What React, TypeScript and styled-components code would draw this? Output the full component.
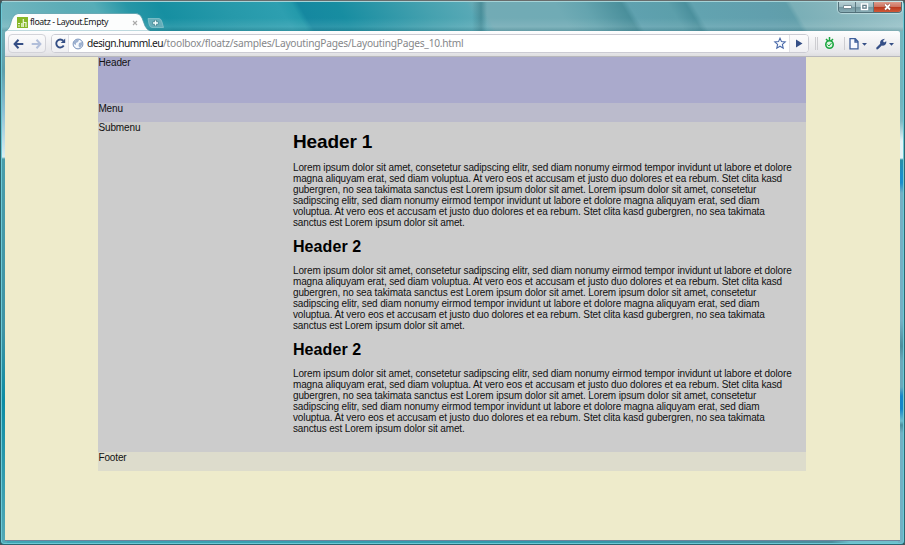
import React from "react";
import styled, { createGlobalStyle } from "styled-components";

const GlobalStyle = createGlobalStyle`
  * { box-sizing: border-box; }
  body { margin: 0; overflow: hidden; background: #4c5557; font-family: "Liberation Sans", Arial, sans-serif; }
`;

const Window = styled.div`
  width: 905px;
  height: 545px;
  padding: 0 5px 3px;
  display: flex;
  flex-direction: column;
  border: 1px solid #2b6570;
  border-top-color: #686c6c;
  border-radius: 5px 5px 4px 4px;
  box-shadow: inset 0 0 0 1px #6cc9d6;
  background:
    linear-gradient(180deg, #78b6bd 0, #5d9fab 70px, #8cc0d4 110px, #d8edf2 156px, #4a9daa 158px, #3f93a4 330px, #0c8ca4 400px, #54a9b6 100%) left / 6px 100% no-repeat,
    linear-gradient(180deg, #78b6bd 0, #71b4be 100px, #7fb9c4 120px, #e4f3f6 140px, #e4f3f6 157px, #288fa6 159px, #1b8ecb 175px, #1b8ecb 182px, #74b0c4 192px, #74b0c4 320px, #4c8e9c 345px, #6ba9bb 360px, #6ba9bb 386px, #1686c8 395px, #1686c8 408px, #6fbecd 420px, #4a8f9e 424px, #72b1c4 432px, #72b1c4 100%) right / 6px 100% no-repeat,
    linear-gradient(90deg, #40a5b5, #2f9aac 60%, #4c8d9c 92%, #6fbfcb 94%) bottom / 100% 6px no-repeat,
    #3f98a8;
`;

const TitleBar = styled.div`
  height: 30px;
  margin: 0 -4px;
  padding: 0 1px 0 4px;
  display: flex;
  flex: none;
  align-items: flex-end;
  border-top: 1px solid #a5d3d7;
  background:
    linear-gradient(180deg, transparent 55%, rgba(255, 255, 255, 0.1) 85%, rgba(60, 110, 120, 0.25) 100%),
    linear-gradient(90deg, transparent 470px, rgba(62, 133, 145, 0.75) 479px, rgba(62, 133, 145, 0.5) 481px, transparent 485px),
    linear-gradient(59deg, #76b7c0 0, #5bacb6 68px, #56adb7 92px, #2796a6 120px, #168fa1 148px, #2699aa 205px, #2d9fb0 250px, #249aab 262px, #1588a0 268px, #178da1 300px, #45a1af 375px, #58a9b6 412px, #72abb5 424px, #70abb5 488px, #64a4af 512px, #4a8f9b 545px, #5fa1af 551px, #5c9fab 585px, #4b909d 600px, #62a3b0 606px, #619fad 665px, #609eaa 686px, #7aafb7 691px, #84b4bb 720px, #9bc4ca 100%);
`;

const Tab = styled.div`
  position: relative;
  width: 140px;
  height: 17px;
  padding: 0 8px 0 11px;
  display: flex;
  align-items: center;
  font: 8.8px/17px "Noto Sans", sans-serif;
  letter-spacing: -0.42px;
  color: #17191b;
`;

const TabShape = styled.svg`
  position: absolute;
  left: 0;
  top: -1px;
`;

const TabText = styled.span`
  position: relative;
  flex: 1;
  margin-left: 2px;
  white-space: nowrap;
`;

const Glyph = styled.svg`
  position: relative;
  flex: none;
  display: block;
`;

const NewTab = styled(Glyph)`
  margin: 0 0 3px 1px;
`;

const WindowButtons = styled.div`
  align-self: flex-start;
  display: flex;
  margin-left: auto;
  height: 11px;
  border: 1px solid #52717a;
  border-top: 0;
  border-radius: 0 0 4px 4px;
  overflow: hidden;
  box-shadow: 0 0 1px 1px rgba(220, 243, 245, 0.6);
`;

const WindowButton = styled.div<{ $width: number; $close?: boolean }>`
  width: ${(p) => p.$width}px;
  display: flex;
  align-items: center;
  justify-content: center;
  border-left: ${(p) => (p.$width === 16 ? "0" : "1px solid #5d7a82")};
  background: ${(p) =>
    p.$close
      ? "linear-gradient(#dc9c8c 0, #cf7663 45%, #b9371c 50%, #cf5938 100%)"
      : "linear-gradient(#b5cdd2 0, #9fbdc4 45%, #72969f 50%, #89adb5 100%)"};
`;

const Toolbar = styled.div`
  height: 26px;
  margin: 0 -1px;
  padding: 3px 5px 0 3px;
  display: flex;
  flex: none;
  align-items: flex-start;
  border-bottom: 1px solid #b8b8bc;
  border-radius: 2px 2px 0 0;
  background: linear-gradient(#fdfdfe, #e7e7ea 85%, #dedee0);
`;

const NavGroup = styled.div`
  width: 38px;
  height: 19px;
  display: flex;
  align-items: center;
  justify-content: space-around;
  border: 1px solid #d3d3d9;
  border-radius: 4px;
  background: linear-gradient(#fbfbfc, #ededf0);
`;

const AddressBar = styled.div`
  flex: 1;
  height: 19px;
  margin: 0 6px 0 5px;
  display: flex;
  align-items: center;
  border: 1px solid #cbcbd3;
  border-radius: 4px;
  background: #fff;
`;

const EndButton = styled.div<{ $side: "left" | "right" }>`
  width: ${(p) => (p.$side === "left" ? 17 : 19)}px;
  height: 100%;
  display: flex;
  align-items: center;
  justify-content: center;
  border-${(p) => (p.$side === "left" ? "right" : "left")}: 1px solid #e0e0e6;
  border-radius: ${(p) => (p.$side === "left" ? "3px 0 0 3px" : "0 3px 3px 0")};
  background: linear-gradient(#fcfcfd, #f0f0f3);
`;

const Url = styled.span`
  flex: 1;
  margin-left: 3px;
  font: 10.2px/17px "Noto Sans", sans-serif;
  letter-spacing: -0.24px;
  white-space: nowrap;
  color: #85878a;
`;

const Domain = styled.span`
  letter-spacing: -0.52px;
  color: #17191b;
`;

const Tools = styled.div`
  display: flex;
  align-items: center;
  height: 19px;
`;

const Divider = styled.div<{ $before?: number; $gap: number }>`
  width: 1px;
  height: 13px;
  margin-left: ${(p) => p.$before ?? 0}px;
  margin-right: ${(p) => p.$gap}px;
  background: #cdcdd1;
`;

const Viewport = styled.div`
  flex: 1;
  margin: 0 -1px;
  padding-left: 93.4px;
  border-bottom: 1px solid #70829b;
  background: #eeebcb;
  font-size: 10px;
  letter-spacing: -0.12px;
  line-height: 11px;
  color: #111;
`;

const Page = styled.div`
  width: 708px;
`;

const Band = styled.div<{ $height: number; $color: string }>`
  height: ${(p) => p.$height}px;
  background: ${(p) => p.$color};
`;

const Columns = styled.div`
  display: flex;
  height: 330px;
  background: #ccc;
`;

const Submenu = styled.div`
  width: 194.6px;
`;

const Article = styled.div`
  padding-top: 8px;
  flex: 1;
`;

const Heading1 = styled.h1`
  margin: 0 0 9px;
  font-size: 19px;
  line-height: 23px;
  color: #000;
`;

const Heading2 = styled.h2`
  margin: 9px 0 8px;
  font-size: 16px;
  letter-spacing: 0.08px;
  line-height: 20px;
  color: #000;
`;

const Paragraph = styled.p`
  margin: 0;
  letter-spacing: -0.13px;
`;

const Line = styled.span`
  display: block;
  white-space: nowrap;
`;

const lorem = [
  "Lorem ipsum dolor sit amet, consetetur sadipscing elitr, sed diam nonumy eirmod tempor invidunt ut labore et dolore",
  "magna aliquyam erat, sed diam voluptua. At vero eos et accusam et justo duo dolores et ea rebum. Stet clita kasd",
  "gubergren, no sea takimata sanctus est Lorem ipsum dolor sit amet. Lorem ipsum dolor sit amet, consetetur",
  "sadipscing elitr, sed diam nonumy eirmod tempor invidunt ut labore et dolore magna aliquyam erat, sed diam",
  "voluptua. At vero eos et accusam et justo duo dolores et ea rebum. Stet clita kasd gubergren, no sea takimata",
  "sanctus est Lorem ipsum dolor sit amet.",
];

const Lorem = () => (
  <Paragraph>
    {lorem.map((line) => (
      <Line key={line}>{line}</Line>
    ))}
  </Paragraph>
);

const Arrow = ({ color, flip }: { color: string; flip?: boolean }) => (
  <Glyph width="11" height="10" viewBox="0 0 11 10">
    <path
      d="M10.3 5H2M5.5 .8L1.6 5L5.5 9.2"
      transform={flip ? "translate(11 0) scale(-1 1)" : undefined}
      fill="none"
      stroke={color}
      strokeWidth="2"
    />
  </Glyph>
);

export default function App() {
  return (
    <>
      <GlobalStyle />
      <Window>
        <TitleBar>
          <Tab>
            <TabShape width="144" height="18" viewBox="0 0 144 18">
              <path d="M-1 18C3 17 4 13 6 6Q8 1 12 .5H130Q134 .5 136 5L139 13Q141 17 144 18Z" fill="#fcfdfd" stroke="#4c97a4" strokeWidth=".7" />
            </TabShape>
            <Glyph width="11" height="11" viewBox="0 0 11 11">
              <rect width="11" height="11" fill="#86b727" />
              <path d="M1 6.5H3M1 9H3M4.8 6V10M6.3 2V10M6.3 5.5H9V10" fill="none" stroke="#edf6d9" strokeWidth="1.2" />
            </Glyph>
            <TabText>floatz - Layout.Empty</TabText>
            <Glyph width="6" height="6" viewBox="0 0 6 6">
              <path d="M1 1L5 5M5 1L1 5" stroke="#aaa" strokeWidth="1.1" />
            </Glyph>
          </Tab>
          <NewTab width="17" height="10" viewBox="0 0 17 10">
            <path d="M1 .5H12Q14 .5 15 4L16.5 9.5H5Q3 9.5 2 6Z" fill="#66adb9" stroke="#8fc7cf" strokeWidth=".7" />
            <path d="M8.5 2V8M5.5 5H11.5" stroke="#47848f" strokeWidth="3" />
            <path d="M8.5 2.5V7.5M6 5H11" stroke="#f5ffff" strokeWidth="1.4" />
          </NewTab>
          <WindowButtons>
            <WindowButton $width={16}>
              <Glyph width="9" height="4"><rect x=".5" y=".5" width="8" height="3" rx=".5" fill="#fff" stroke="#526b75" strokeWidth=".7" /></Glyph>
            </WindowButton>
            <WindowButton $width={18}>
              <Glyph width="9" height="8"><rect x="1.5" y="1" width="6" height="5.5" fill="#637f8a" stroke="#fff" strokeWidth="1.4" /><rect x="3.5" y="3" width="2" height="1.5" fill="#fff" /></Glyph>
            </WindowButton>
            <WindowButton $width={28} $close>
              <Glyph width="9" height="8" viewBox="0 0 9 8"><path d="M2 1.5L7 6.5M7 1.5L2 6.5" stroke="#804036" strokeWidth="3" /><path d="M2 1.5L7 6.5M7 1.5L2 6.5" stroke="#fff" strokeWidth="1.8" /></Glyph>
            </WindowButton>
          </WindowButtons>
        </TitleBar>
        <Toolbar>
          <NavGroup><Arrow color="#354f86" /><Arrow color="#b2bfda" flip /></NavGroup>
          <AddressBar>
            <EndButton $side="left">
              <Glyph width="11" height="11" viewBox="0 0 11 11">
                <path d="M8.7 7.5A4 4 0 1 1 8.2 2.7" fill="none" stroke="#354f86" strokeWidth="1.9" />
                <path d="M10.2 .5V5H5.7Z" fill="#354f86" />
              </Glyph>
            </EndButton>
            <Glyph width="15" height="12" viewBox="-3 0 15 12">
              <circle cx="6" cy="6" r="4.9" fill="#f5f8fc" stroke="#748eb9" />
              <path d="M2 3L5 1.5L7 2L6 4L4 5L4 7L2 6ZM7 5L10 4L10 7L8 10L6.5 8Z" fill="#9db1d0" />
            </Glyph>
            <Url><Domain>design.humml.eu</Domain>/toolbox/floatz/samples/LayoutingPages/LayoutingPages_10.html</Url>
            <Glyph width="18" height="13" viewBox="-1 0 18 13">
              <path d="M8 1.2L9.5 4.6L13.2 5L10.4 7.4L11.2 11.1L8 9.2L4.8 11.1L5.6 7.4L2.8 5L6.5 4.6Z" fill="#f8fbff" stroke="#4868a8" strokeWidth="1.1" />
            </Glyph>
            <EndButton $side="right">
              <Glyph width="8" height="9"><path d="M1 .5L7.5 4.5L1 8.5Z" fill="#354f86" /></Glyph>
            </EndButton>
          </AddressBar>
          <Tools>
            <Divider $gap={1} /><Divider $gap={6} />
            <Glyph width="11" height="13" viewBox="0 0 11 13">
              <path d="M5.5 0V4M2 2L4 4M9 2L7 4" stroke="#19a63f" strokeWidth="1.5" />
              <circle cx="5.5" cy="7.5" r="3.7" fill="#dff5e2" stroke="#19a63f" strokeWidth="1.6" />
              <path d="M3.5 7.5L5 9L7.5 6" fill="none" stroke="#19a63f" />
            </Glyph>
            <Divider $before={9} $gap={4} />
            <Glyph width="18" height="12" viewBox="0 0 18 12">
              <path d="M1 .7H6.3L9 3.4V10.8H1ZM6 1V4H9" fill="#f9faff" stroke="#3f5f9b" strokeWidth="1.3" />
              <path d="M13 5H18L15.5 7.7Z" fill="#354f86" />
            </Glyph>
            <Glyph width="28" height="12" viewBox="0 0 28 12">
              <path d="M10 11L9 10L13.2 5.8Q12.5 2.5 15.8 1.2L18 .8L16 3L17 4.5L19.3 3.2Q19.7 7 16 7.7L14.8 7.6L11.2 11Q9.8 12 9 10.5Z" fill="#354f86" />
              <path d="M22 5H27L24.5 7.7Z" fill="#354f86" />
            </Glyph>
          </Tools>
        </Toolbar>
        <Viewport>
          <Page>
            <Band $height={46} $color="#aaaacc">Header</Band>
            <Band $height={19} $color="#bbbbcc">Menu</Band>
            <Columns>
              <Submenu>Submenu</Submenu>
              <Article>
                <Heading1>Header 1</Heading1>
                <Lorem />
                <Heading2>Header 2</Heading2>
                <Lorem />
                <Heading2>Header 2</Heading2>
                <Lorem />
              </Article>
            </Columns>
            <Band $height={19} $color="#dddccc">Footer</Band>
          </Page>
        </Viewport>
      </Window>
    </>
  );
}
